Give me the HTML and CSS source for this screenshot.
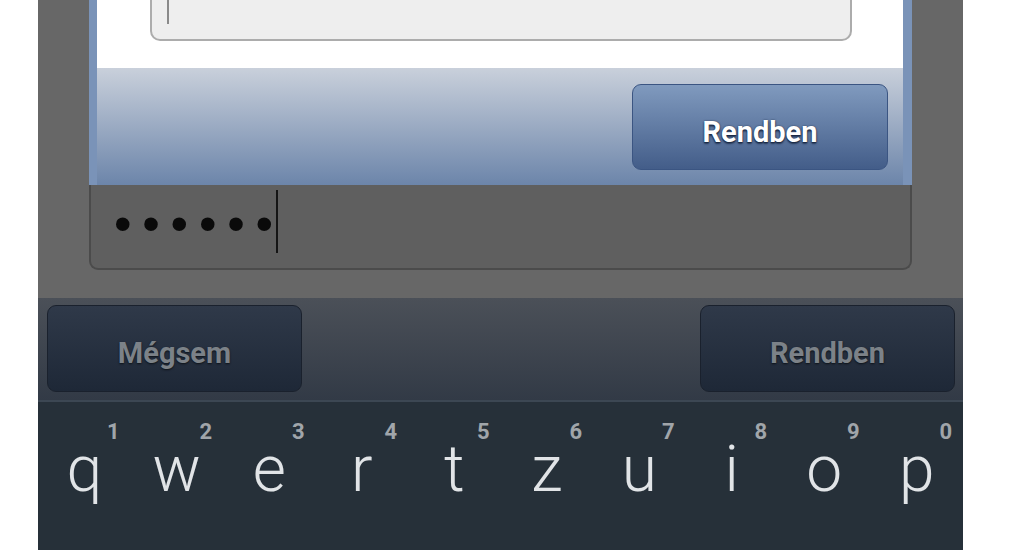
FILE: index.html
```html
<!DOCTYPE html>
<html lang="hu">
<head>
    <meta charset="UTF-8">
    <meta name="viewport" content="width=device-width, initial-scale=1.0">
    <title>Jelszó</title>
    <link rel="stylesheet" href="styles.css">
</head>
<body>
    <div class="screen">
        <!-- Párbeszédablak -->
        <div class="dialog">
            <div class="dialog-body">
                <div class="text-input"><span class="caret caret-light"></span></div>
            </div>
            <div class="dialog-footer">
                <button class="btn-blue">Rendben</button>
            </div>
        </div>

        <!-- Jelszó mező -->
        <div class="password-field">
            <span class="dots">••••••</span>
            <span class="caret caret-dark"></span>
        </div>

        <!-- Gombsor a billentyűzet felett -->
        <div class="action-bar">
            <button class="btn-dark">Mégsem</button>
            <button class="btn-dark">Rendben</button>
        </div>

        <!-- Billentyűzet -->
        <div class="keyboard">
            <div class="key"><span class="num">1</span><span class="letter">q</span></div>
            <div class="key"><span class="num">2</span><span class="letter">w</span></div>
            <div class="key"><span class="num">3</span><span class="letter">e</span></div>
            <div class="key"><span class="num">4</span><span class="letter">r</span></div>
            <div class="key"><span class="num">5</span><span class="letter">t</span></div>
            <div class="key"><span class="num">6</span><span class="letter">z</span></div>
            <div class="key"><span class="num">7</span><span class="letter">u</span></div>
            <div class="key"><span class="num">8</span><span class="letter">i</span></div>
            <div class="key"><span class="num">9</span><span class="letter">o</span></div>
            <div class="key"><span class="num">0</span><span class="letter">p</span></div>
        </div>
    </div>
</body>
</html>
```

FILE: styles.css
```css
/* Alap */
* {
    margin: 0;
    padding: 0;
    box-sizing: border-box;
}

body {
    background: #ffffff;
    font-family: 'Roboto', 'Liberation Sans', sans-serif;
    height: 550px;
    overflow: hidden;
}

/* Telefon képernyő */
.screen {
    margin-left: 38px;
    width: 925px;
    height: 550px;
    overflow: hidden;
    background: #676767;
    display: flex;
    flex-direction: column;
}

/* Párbeszédablak */
.dialog {
    margin: 0 51px;
    border-left: 8px solid #7a93b8;
    border-right: 9px solid #7a93b8;
}

.dialog-body {
    background: #ffffff;
    height: 68px;
    padding: 0 51px 0 53px;
}

.text-input {
    height: 41px;
    background: #eeeeee;
    border: 2px solid #acacac;
    border-top: none;
    border-radius: 0 0 10px 10px;
    padding-left: 15px;
}

.caret {
    display: inline-block;
    width: 2px;
}

.caret-light {
    height: 24px;
    background: #8a8a8a;
}

.dialog-footer {
    height: 117px;
    padding: 16px 15px 0 0;
    display: flex;
    justify-content: flex-end;
    align-items: flex-start;
    background: linear-gradient(180deg, #c9d0db, #6c85aa);
}

button {
    font-family: 'Roboto', 'Liberation Sans', sans-serif;
    font-weight: bold;
    font-size: 29px;
    line-height: 29px;
    border-radius: 9px;
    padding-top: 10px;
    width: 256px;
    height: 86px;
}

.btn-blue {
    color: #ffffff;
    background: linear-gradient(180deg, #809abe, #435d89);
    border: 1px solid #3b5582;
    text-shadow: 0 1px 1px #1c2a44, 0 0 2px #2a3c5c, 0 2px 2px #2a3c5c;
}

/* Jelszó mező */
.password-field {
    margin: 0 51px;
    height: 85px;
    background: #5f5f5f;
    border: 2px solid #4b4b4b;
    border-top: none;
    border-radius: 0 0 9px 9px;
    padding: 5px 0 0 23px;
    display: flex;
    align-items: flex-start;
}

.dots {
    font-family: 'Liberation Sans', sans-serif;
    font-size: 50px;
    line-height: 63px;
    letter-spacing: 10.8px;
    color: #0a0a0a;
    margin-top: 3px;
}

.caret-dark {
    height: 63px;
    background: #151515;
    margin-left: -8px;
}

/* Gombsor */
.action-bar {
    margin-top: 28px;
    height: 102px;
    padding: 7px 8px 0 9px;
    display: flex;
    justify-content: space-between;
    align-items: flex-start;
    background: linear-gradient(180deg, #4b5058, #323a46);
}

.btn-dark {
    width: 255px;
    height: 87px;
    color: #7c8288;
    background: linear-gradient(180deg, #2f3949, #1e2837);
    border: 1px solid #1a212d;
    text-shadow: 0 1px 2px #0d1218;
}

/* Billentyűzet */
.keyboard {
    flex: 1;
    background: #263039;
    border-top: 2px solid #3c4753;
    display: grid;
    grid-template-columns: repeat(10, 1fr);
    padding-top: 19px;
}

.key {
    display: flex;
    flex-direction: column;
}

.num {
    font-size: 22px;
    line-height: 22px;
    font-weight: bold;
    color: #a0a5aa;
    text-align: right;
    padding-right: 11px;
}

.letter {
    font-size: 64px;
    line-height: 50px;
    font-weight: 350;
    color: #e1e4e7;
    text-align: center;
    margin-top: 2px;
}
```
